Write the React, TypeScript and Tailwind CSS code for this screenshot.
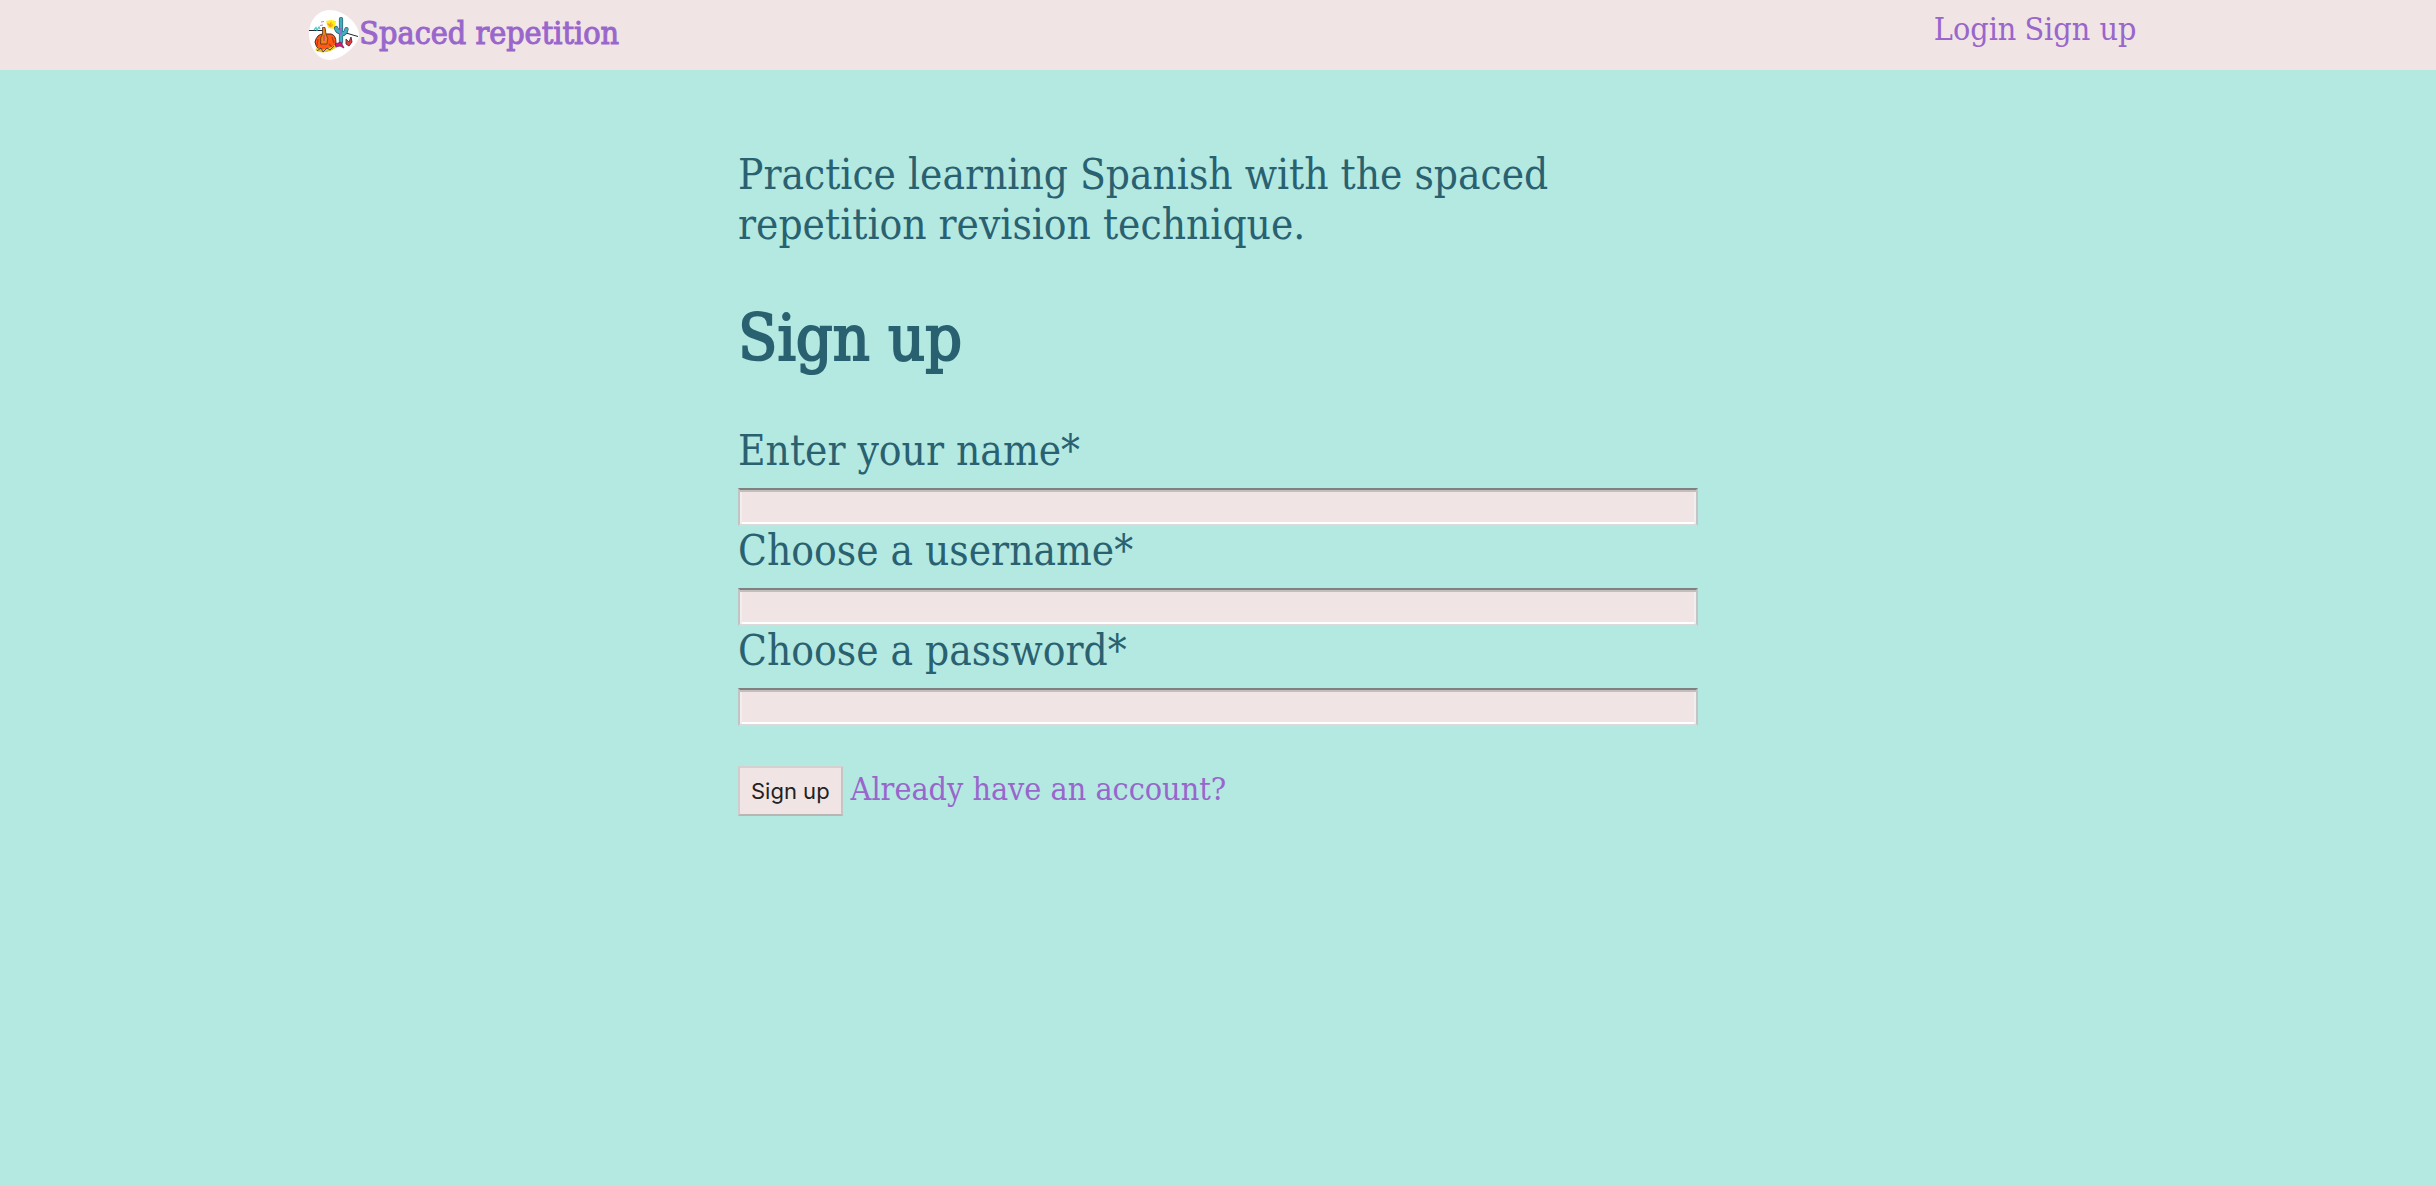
import React from "react";

const fields = [
  { id: "name", label: "Enter your name*", type: "text" },
  { id: "username", label: "Choose a username*", type: "text" },
  { id: "password", label: "Choose a password*", type: "password" },
];

function Logo() {
  return (
    <svg viewBox="0 0 50 50" className="size-[50px] shrink-0" aria-hidden="true">
      <path d="M21 0C34 0 50 13 50 25C50 35 32 50 21 50C8 50 0 36 0 24C0 10 9 0 21 0Z" fill="#fff" />
      <path d="M0 20.500H17M37 23L49 26.500" stroke="#1f2a30" strokeWidth="1" fill="none" />
      <path d="M17 11L22 10L27 11L26 19L19 18Z" fill="#ffee12" />
      <path d="M18.500 13.500L22 17M22.500 12.500C18.500 16 24 17.500 23 14" stroke="#f49a20" strokeWidth="1.300" fill="none" />
      <path d="M12 12L15 11.500M11 15.500L14 15" stroke="#b682d8" strokeWidth="1" />
      <path d="M5 20L7 17.500L8 20L10 17L11 19" stroke="#55c5cf" strokeWidth="1.300" fill="none" />
      <path d="M32 9V32M27 18Q28 22 32 22.500M37.500 19Q37 24 32 24.500" stroke="#264f67" strokeWidth="4.200" strokeLinecap="round" fill="none" />
      <path d="M32 9V32M27 18Q28 21.500 32 22.500M37.500 19Q37 23.500 32 24.500" stroke="#42afbd" strokeWidth="3" strokeLinecap="round" fill="none" />
      <path d="M32 18V25" stroke="#9b69d0" strokeWidth="1.800" />
      <path d="M6 32Q8 24 14 24H22Q27 25 27 33Q26 40 17 41Q8 42 6 32Z" fill="#ff5913" stroke="#432b26" strokeWidth="1" />
      <path d="M9 29L8 36M23 27L25 33M20 34L23 37" stroke="#b53c15" strokeWidth="1.200" />
      <path d="M13.500 17.500H16L17 24Q20 28 18 34H11.500Q11 27 13.500 24Z" fill="#ee8518" stroke="#593622" strokeWidth="0.800" />
      <path d="M15 25V31" stroke="#d04c70" strokeWidth="1.600" />
      <path d="M7 39Q15 44 27 36" stroke="#e8c52b" strokeWidth="3" fill="none" />
      <path d="M8 41L12 38L14 42L18 38L21 40L25 36" stroke="#4a4148" strokeWidth="0.900" fill="none" />
      <path d="M26 34L32 32L35 38L31 36L27 37Z" fill="#dc1480" stroke="#5b244a" strokeWidth="0.700" />
      <path d="M37 29L40 32L42 27L43 32L40 36L37 34Z" fill="#dd3e40" stroke="#542c38" strokeWidth="0.900" />
    </svg>
  );
}

export default function App() {
  return (
    <div className="min-h-screen bg-[#b4e9e2] font-['DejaVu_Serif_Condensed','DejaVu_Serif',serif] text-[#2a6171]">
      <header className="flex items-start justify-between bg-[#f0e4e4] py-[10px] pr-[12.3%] pl-[12.7%] text-[32px] text-[#9966cc]">
        <a href="#home" className="flex items-center leading-[42px] [-webkit-text-stroke:1px_#9966cc]">
          <Logo />
          <span className="pb-1">Spaced repetition</span>
        </a>
        <nav className="flex gap-2 leading-[38px]">
          <a href="#login">Login</a>
          <a href="#signup">Sign up</a>
        </nav>
      </header>

      <main className="mx-auto max-w-[960px] pt-20">
        <p className="text-[42px] leading-[50px]">Practice learning Spanish with the spaced repetition revision technique.</p>
        <h1 className="mt-[46px] text-[64px] leading-[84px] font-normal [-webkit-text-stroke:2px_#2a6171]">Sign up</h1>
        <form className="mt-[46px]" onSubmit={(e) => e.preventDefault()}>
          {fields.map((f) => (
            <div key={f.id}>
              <label htmlFor={f.id} className="block h-[62px] text-[42px] leading-[50px]">{f.label}</label>
              <input
                id={f.id}
                type={f.type}
                className="block h-[38px] w-full border-2 border-t-[#808080] border-r-[#c3c3c3] border-b-[#dadada] border-l-[#c3c3c3] bg-[#f0e4e4] px-2 font-['Inter',sans-serif] text-[22px] shadow-[inset_0_2px_0_#c3bebe,inset_2px_0_0_#f0eeee,inset_-2px_0_0_#f0eeee,inset_0_-2px_0_#ffffff] outline-none"
              />
            </div>
          ))}
          <div className="mt-10 flex items-start gap-2">
            <button type="submit" className="h-[50px] border-2 border-t-[#d6d0d0] border-r-[#c9c4c4] border-b-[#b8b5b5] border-l-[#d0cccc] bg-[#f0e4e4] px-[11px] font-['Inter',sans-serif] text-[22px] text-[#222222]">Sign up</button>
            <a href="#login" className="text-[32px] leading-[46px] text-[#9966cc]">Already have an account?</a>
          </div>
        </form>
      </main>
    </div>
  );
}
